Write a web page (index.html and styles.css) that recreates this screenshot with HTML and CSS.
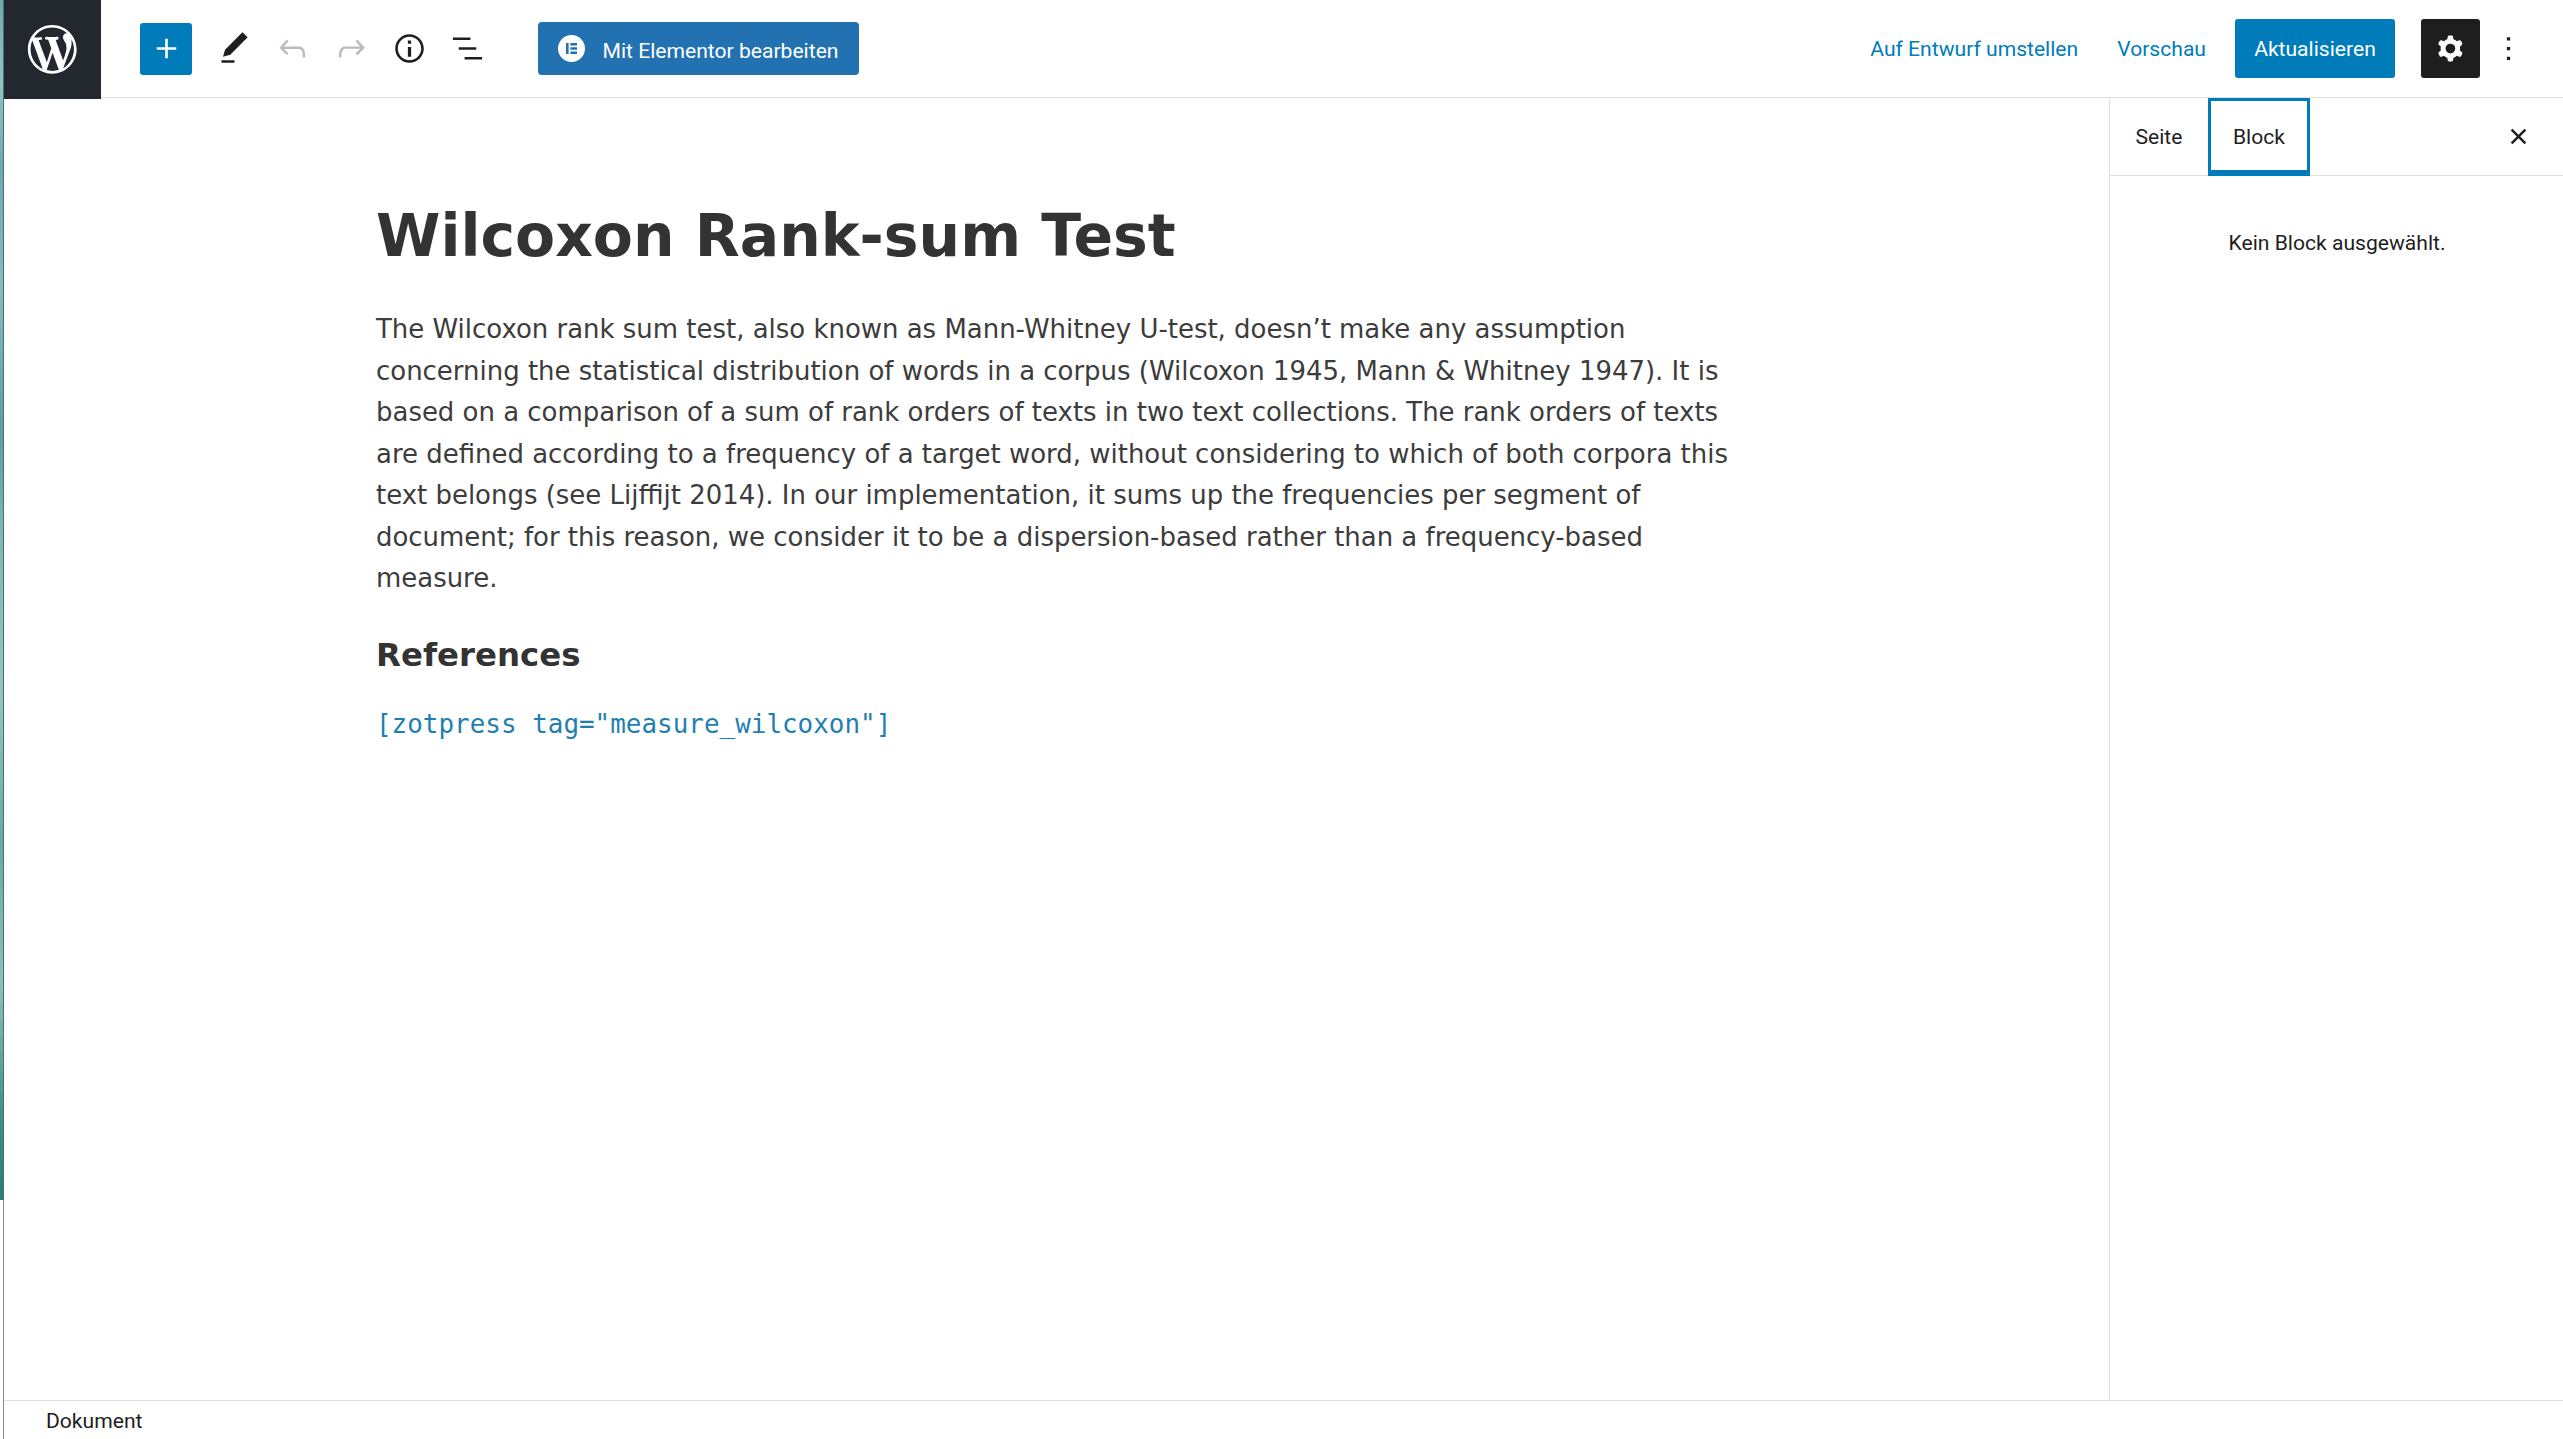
FILE: index.html
```html
<!DOCTYPE html>
<html lang="de">
<head>
<meta charset="utf-8">
<title>Wilcoxon Rank-sum Test – Seite bearbeiten</title>
<link rel="stylesheet" href="styles.css">
</head>
<body>
<div class="desktop-edge"><div class="wallpaper"></div></div>
<div class="editor">
  <header class="header">
    <a class="wp-home"><svg viewBox="-2 -2 24 24"><path d="M20 10c0-5.51-4.49-10-10-10C4.48 0 0 4.49 0 10c0 5.52 4.48 10 10 10 5.51 0 10-4.48 10-10zM7.78 15.37L4.37 6.22c.55-.02 1.17-.08 1.17-.08.5-.06.44-1.13-.06-1.11 0 0-1.45.11-2.37.11-.18 0-.37 0-.58-.01C4.12 2.69 6.87 1.11 10 1.11c2.33 0 4.45.87 6.05 2.34-.68-.11-1.65.39-1.65 1.58 0 .74.45 1.36.9 2.1.35.61.55 1.36.55 2.46 0 1.49-1.4 5-1.4 5l-3.03-8.37c.54-.02.82-.17.82-.17.5-.05.44-1.25-.06-1.22 0 0-1.44.12-2.38.12-.87 0-2.33-.12-2.33-.12-.5-.03-.56 1.2-.06 1.22l.92.08 1.26 3.41zM17.41 10c.24-.64.74-1.87.43-4.25.7 1.29 1.05 2.71 1.05 4.25 0 3.29-1.73 6.24-4.4 7.78.97-2.59 1.94-5.2 2.92-7.78zM6.1 18.09C3.12 16.65 1.11 13.53 1.11 10c0-1.3.23-2.48.72-3.59C3.25 10.3 4.67 14.2 6.1 18.09zm4.03-6.63l2.58 6.98c-.86.29-1.76.45-2.71.45-.79 0-1.57-.11-2.29-.33.81-2.38 1.62-4.74 2.42-7.1z"/></svg></a>
    <div class="tools">
      <button class="inserter"><svg class="icon" viewBox="0 0 24 24"><path d="M18 11.2h-5.2V6h-1.6v5.2H6v1.6h5.2V18h1.6v-5.2H18z"/></svg></button>
      <button class="tool"><svg class="icon" viewBox="0 0 24 24"><path d="M20.1 5.1L16.9 2 6.2 12.7l-1.3 4.4 4.5-1.3L20.1 5.1zM4 20.8h8v-1.5H4v1.5z"/></svg></button>
      <button class="tool disabled"><svg class="icon" viewBox="0 0 24 24"><path d="M18.3 11.7c-.6-.6-1.4-.9-2.3-.9H6.7l2.9-3.3-1.1-1-4.5 5L8.5 16l1-1-2.7-2.7H16c.5 0 .9.2 1.3.5 1 1 1 3.4 1 4.5v.3h1.5v-.2c0-1.5 0-4.3-1.5-5.7z"/></svg></button>
      <button class="tool disabled"><svg class="icon" viewBox="0 0 24 24"><path d="M15.6 6.5l-1.1 1 2.9 3.3H8c-.9 0-1.7.3-2.3.9-1.4 1.5-1.4 4.2-1.4 5.6v.2h1.5v-.3c0-1.1 0-3.5 1-4.5.3-.3.7-.5 1.3-.5h9.2L14.5 15l1.1 1.1 4.6-4.6-4.6-5z"/></svg></button>
      <button class="tool"><svg class="icon" viewBox="0 0 24 24"><path d="M12 3.2c-4.8 0-8.8 3.9-8.8 8.8 0 4.8 3.9 8.8 8.8 8.8 4.8 0 8.8-3.9 8.8-8.8 0-4.8-4-8.8-8.8-8.8zm0 16c-4 0-7.2-3.3-7.2-7.2C4.8 8 8 4.8 12 4.8s7.2 3.3 7.2 7.2c0 4-3.2 7.2-7.2 7.2zM11 17h2v-6h-2v6zm0-8h2V7h-2v2z"/></svg></button>
      <button class="tool list-view"><svg class="icon" viewBox="0 0 24 24"><path d="M13.8 5.2H3v1.5h10.8V5.2zm-3.6 12v1.5H21v-1.5H10.2zm7.2-6H6.6v1.5h10.8v-1.5z"/></svg></button>
      <button class="elementor">
        <svg class="elementor-logo" viewBox="0 0 27 27"><circle cx="13.5" cy="13.5" r="13.5" fill="#fff"/><path fill="#2271b1" d="M8 8h2.6v11H8zM12.4 8H19v2.5h-6.6zM12.4 12.3H19v2.5h-6.6zM12.4 16.5H19V19h-6.6z"/></svg>
        <span>Mit Elementor bearbeiten</span>
      </button>
    </div>
    <div class="settings">
      <a class="link draft">Auf Entwurf umstellen</a>
      <a class="link preview">Vorschau</a>
      <button class="update">Aktualisieren</button>
      <button class="cog"><svg class="icon" viewBox="0 0 24 24"><path fill-rule="evenodd" d="M10.289 4.836A1 1 0 0111.275 4h1.306a1 1 0 01.987.836l.244 1.466c.787.26 1.503.679 2.108 1.218l1.393-.522a1 1 0 011.216.437l.653 1.13a1 1 0 01-.23 1.273l-1.148.944a6.025 6.025 0 010 2.435l1.149.946a1 1 0 01.23 1.272l-.653 1.13a1 1 0 01-1.216.437l-1.394-.522c-.605.54-1.32.958-2.108 1.218l-.244 1.466a1 1 0 01-.987.836h-1.306a1 1 0 01-.986-.836l-.244-1.466a5.995 5.995 0 01-2.108-1.218l-1.394.522a1 1 0 01-1.217-.436l-.653-1.131a1 1 0 01.23-1.272l1.149-.946a6.026 6.026 0 010-2.435l-1.148-.944a1 1 0 01-.23-1.272l.653-1.131a1 1 0 011.217-.437l1.393.522a5.994 5.994 0 012.108-1.218l.244-1.466zM14.929 12a3 3 0 11-6 0 3 3 0 016 0z"/></svg></button>
      <button class="more"><svg class="icon" viewBox="0 0 24 24"><path d="M13 19h-2v-2h2v2zm0-6h-2v-2h2v2zm0-6h-2V5h2v2z"/></svg></button>
    </div>
  </header>
  <div class="body">
    <main class="canvas">
      <article class="post">
        <h1 class="title">Wilcoxon Rank-sum Test</h1>
        <p class="paragraph">The Wilcoxon rank sum test, also known as Mann-Whitney U-test, doesn’t make any assumption concerning the statistical distribution of words in a corpus (Wilcoxon 1945, Mann &amp; Whitney 1947). It is based on a comparison of a sum of rank orders of texts in two text collections. The rank orders of texts are defined according to a frequency of a target word, without considering to which of both corpora this text belongs (see Lijffijt 2014). In our implementation, it sums up the frequencies per segment of document; for this reason, we consider it to be a dispersion-based rather than a frequency-based measure.</p>
        <h3 class="heading">References</h3>
        <pre class="shortcode">[zotpress tag="measure_wilcoxon"]</pre>
      </article>
    </main>
    <aside class="sidebar">
      <div class="tabs">
        <button class="tab">Seite</button>
        <button class="tab active">Block</button>
        <button class="close"><svg class="icon" viewBox="0 0 24 24"><path d="M12 13.06l3.712 3.713 1.061-1.06L13.061 12l3.712-3.712-1.06-1.06L12 10.938 8.288 7.227l-1.061 1.06L10.939 12l-3.712 3.712 1.06 1.061L12 13.061z"/></svg></button>
      </div>
      <p class="empty">Kein Block ausgewählt.</p>
    </aside>
  </div>
  <footer class="footer">Dokument</footer>
</div>
</body>
</html>
```

FILE: styles.css
```css
* { box-sizing: border-box; }
body {
  margin: 0;
  height: 1439px;
  display: flex;
  overflow: hidden;
  background: #fff;
  color: #1e1e1e;
  font: 21.1px/1.4 Roboto, sans-serif;
}
button {
  display: flex;
  align-items: center;
  justify-content: center;
  padding: 0;
  border: 0;
  background: none;
  color: inherit;
  font: inherit;
}
svg { display: block; fill: currentColor; }
.icon { width: 39px; height: 39px; }

.desktop-edge { width: 4px; background: linear-gradient(#4b6e6e 1200px, #8b8b8b 1200px) right / 1px 100% no-repeat; }
.wallpaper {
  width: 3px;
  height: 1200px;
  background: linear-gradient(#6fa9b0, #8fc4c4 7%, #6fa9b0 14%, #86bcc0 24%, #5d9ea3 36%, #7fb9b6 45%, #93c5bf 58%, #68aaa6 70%, #8dc0ba 82%, #3f9089 93%, #2a7d76);
}

.editor { flex: 1; display: flex; flex-direction: column; min-width: 0; }
.header { height: 98px; display: flex; align-items: flex-start; border-bottom: 1px solid #e0e0e0; }
.wp-home {
  width: 97px;
  height: 99px;
  flex: none;
  display: flex;
  align-items: center;
  justify-content: center;
  background: #23282e;
  color: #fff;
}
.wp-home svg { width: 58.5px; height: 58.5px; }
.tools { display: flex; align-items: center; height: 97px; padding-left: 39px; }
.inserter { width: 52px; height: 52px; margin-right: 13px; border-radius: 3px; background: #007cba; color: #fff; }
.tool { width: 58.5px; height: 58.5px; }
.list-view { width: 57px; }
.disabled { color: #bbb; }
.elementor { width: 321px; height: 53px; margin-left: 42px; border-radius: 4px; background: #2271b1; color: #fff; justify-content: flex-start; padding-left: 20px; }
.elementor-logo { width: 27px; height: 27px; margin-right: 17.5px; }
.elementor span { padding-top: 5px; }

.settings { display: flex; align-items: center; height: 97px; margin-left: auto; padding-right: 26px; }
.link { color: #007cba; }
.preview { margin: 0 29px 0 39px; }
.update { width: 160px; height: 59px; border-radius: 3px; background: #007cba; color: #fff; }
.cog { width: 59px; height: 59px; margin-left: 26px; border-radius: 3px; background: #1e1e1e; color: #fff; }
.more { width: 57px; height: 59px; }

.body { flex: 1; display: flex; min-height: 0; }
.canvas { flex: 1; padding: 99px 0 0 372px; font-family: "DejaVu Sans", sans-serif; }
.post { width: 1365px; }
.title { margin: 0; font-size: 58.4px; line-height: 79px; color: #333; }
.paragraph { margin: 33px 0 0; font-size: 25.96px; line-height: 41.5px; color: #3c3c3c; }
.heading { margin: 30px 0 0; font-size: 32.4px; line-height: 50px; color: #333; }
.shortcode { margin: 24px 0 0; font: 25.95px/41.5px "DejaVu Sans Mono", monospace; color: #1f7fb0; }

.sidebar { width: 454px; border-left: 1px solid #e0e0e0; }
.tabs { height: 78px; display: flex; border-bottom: 1px solid #e0e0e0; }
.tab { width: 98px; height: 78px; }
.active { width: 102px; box-shadow: inset 0 0 0 3px #007cba, inset 0 -6px 0 0 #007cba; }
.close { width: 39px; margin: 0 25px 0 auto; }
.empty { margin: 52px 0 0 1px; text-align: center; }
.footer { height: 39px; border-top: 1px solid #e0e0e0; padding: 5px 0 0 42px; }
```
